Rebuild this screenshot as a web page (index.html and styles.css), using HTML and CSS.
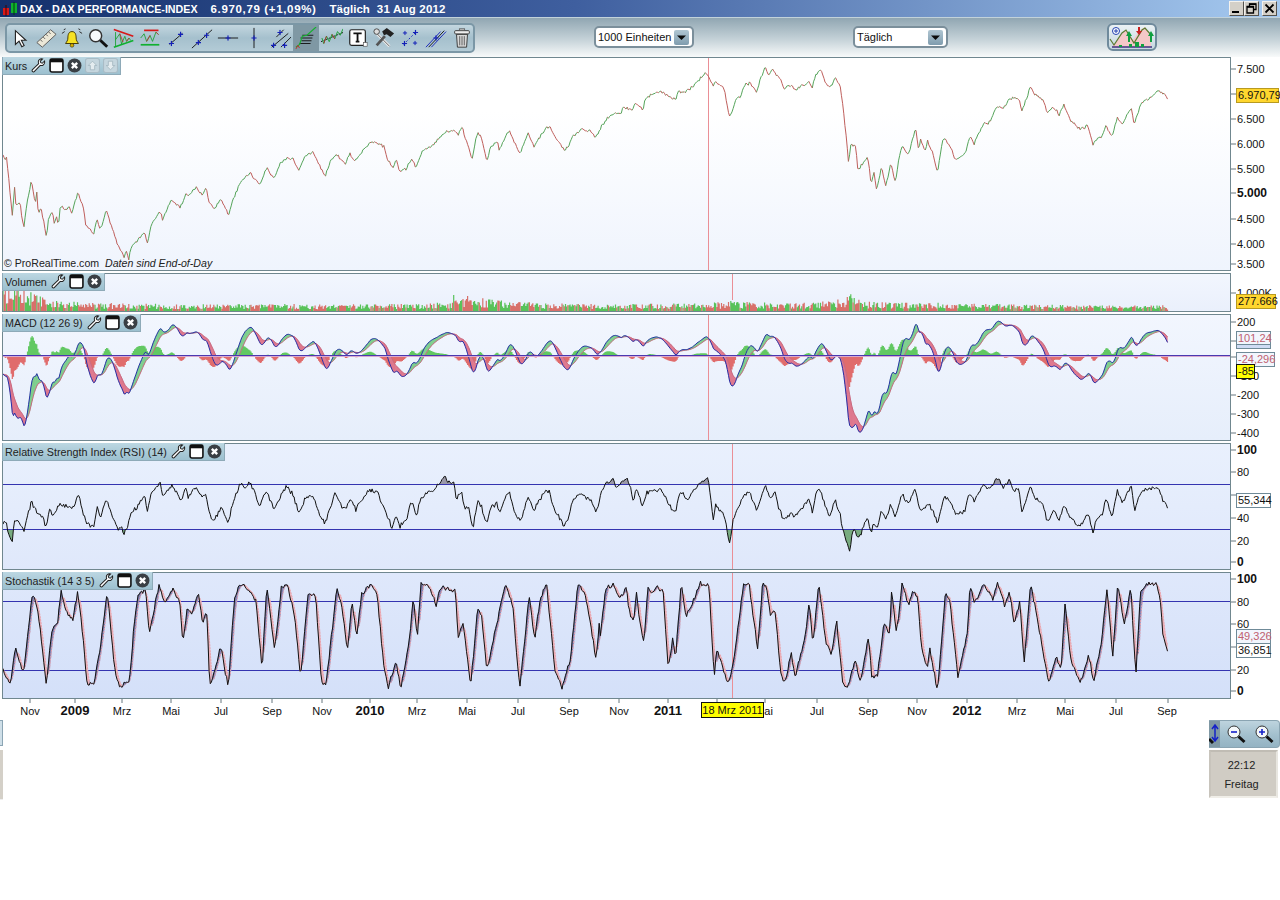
FILE: index.html
```html
<!DOCTYPE html>
<html lang="de">
<head>
<meta charset="utf-8">
<title>DAX - DAX PERFORMANCE-INDEX</title>
<link rel="stylesheet" href="styles.css">
</head>
<body>
<svg class="defs" width="0" height="0" aria-hidden="true">
  <symbol id="i-wrench" viewBox="0 0 16 16"><path d="M14.500 3.200 12 5.600 10.400 5 9.900 3.400 12.300 1.100C10 .5 7.700 1.800 7.800 4.300 7.900 5 8 5.600 8.200 6L1.600 12.500C.8 13.300 1.100 14.500 2 14.800 2.700 15 3.300 14.800 3.700 14.300L9.900 7.900C12.500 8.700 15.300 6.200 14.500 3.200Z" fill="#fff" stroke="#222" stroke-width="1.100"/></symbol>
  <symbol id="i-win" viewBox="0 0 14 14"><rect x="1" y="1" width="12" height="12" rx="1.500" fill="#fff" stroke="#111" stroke-width="1.500"/><rect x="1" y="1" width="12" height="3" fill="#111"/></symbol>
  <symbol id="i-close" viewBox="0 0 14 14"><circle cx="7" cy="7" r="6.500" fill="#3a3f44"/><path d="M4.500 4.500 9.500 9.500M9.500 4.500 4.500 9.500" stroke="#fff" stroke-width="2.200"/></symbol>
  <symbol id="i-up" viewBox="0 0 14 14"><rect x=".5" y=".5" width="13" height="13" rx="2" fill="#c5d6de" stroke="#a9bcc6"/><path d="M7 3 11 7H9V11H5V7H3Z" fill="#e4ecef" stroke="#9fb2bc" stroke-width=".7"/></symbol>
  <symbol id="i-down" viewBox="0 0 14 14"><rect x=".5" y=".5" width="13" height="13" rx="2" fill="#c5d6de" stroke="#a9bcc6"/><path d="M7 11 3 7H5V3H9V7H11Z" fill="#e4ecef" stroke="#9fb2bc" stroke-width=".7"/></symbol>
  <symbol id="i-caret" viewBox="0 0 15 15"><path d="M3 5.500H12L7.500 10Z" fill="#0b0b0b"/></symbol>
  <symbol id="i-cross" viewBox="0 0 6 6"><path d="M3 0V6M0 3H6" stroke="#1420b8" stroke-width="1.300"/></symbol>
</svg>

<header class="titlebar">
  <svg class="title-icon" width="17" height="14" viewBox="0 0 17 14"><rect x="2" y="6" width="6" height="7" fill="#d81818"/><path d="M5 3V14" stroke="#400"/><rect x="10" y="1" width="6" height="10" fill="#10b030"/><path d="M13 0V13" stroke="#040"/></svg>
  <span class="title-name">DAX - DAX PERFORMANCE-INDEX</span>
  <span class="title-value">6.970,79 (+1,09%)</span>
  <span class="title-period">Täglich</span>
  <span class="title-date">31 Aug 2012</span>
  <div class="winbtns">
    <button class="winbtn"><svg width="11" height="11" viewBox="0 0 11 11"><rect x="1" y="8" width="7" height="2" fill="#000"/></svg></button>
    <button class="winbtn"><svg width="11" height="11" viewBox="0 0 11 11"><path d="M3.500 3V.8H10V6.500H8M1 3.500H7.500V10H1Z" fill="none" stroke="#000" stroke-width="1.300"/><path d="M3 1.200H10M1 4H7.500" stroke="#000" stroke-width="1.500"/></svg></button>
    <button class="winbtn winbtn-close"><svg width="11" height="11" viewBox="0 0 11 11"><path d="M1.500 1.500 9.500 9.500M9.500 1.500 1.500 9.500" stroke="#000" stroke-width="1.800"/></svg></button>
  </div>
</header>

<section class="toolbar">
  <div class="tools">
    <span class="tool"><svg viewBox="0 0 24 24"><path d="M7 4V19L11 15.500 14 21.500 16.500 20.300 13.500 14.500H18.500Z" fill="#fff" stroke="#222" stroke-width="1.200"/></svg></span>
    <span class="tool"><svg viewBox="0 0 24 24"><path d="M2 17 17 3 23 8 8 22Z" fill="#ece8d8" stroke="#555"/><path d="M6 14 8 16M9 11 11 13M12 8 14 10M15 5.500 17 7.500" stroke="#555"/></svg></span>
    <span class="tool"><svg viewBox="0 0 24 24"><path d="M12 5C8 5 7.500 9 7.500 12 7.500 15 6 16 5 18H19C18 16 16.500 15 16.500 12 16.500 9 16 5 12 5Z" fill="#f6e224" stroke="#3a3000"/><circle cx="12" cy="20" r="2" fill="#d8b000" stroke="#3a3000" stroke-width=".7"/><path d="M4 5 1 7M20 5 23 7M5 2 3 3M19 2 21 3" stroke="#222"/></svg></span>
    <span class="tool"><svg viewBox="0 0 24 24"><circle cx="9.500" cy="9.500" r="6.500" fill="#f6fafc" stroke="#333" stroke-width="1.600"/><path d="M14.500 14.500 22 21.500" stroke="#111" stroke-width="3.200"/></svg></span>
    <span class="tool"><svg viewBox="0 0 26 24"><path d="M1 2 24 10" stroke="#d81818" stroke-width="2"/><path d="M1 23 24 15" stroke="#10b030" stroke-width="2"/><path d="M3 5V22M3 14 8 7 10 19 14 10 16 16 19 12 21 15" fill="none" stroke="#18a030"/><path d="M8 7 12 17M16 16 19 12" stroke="#c03030"/></svg></span>
    <span class="tool"><svg viewBox="0 0 26 24"><path d="M6 3H23" stroke="#d81818" stroke-width="2"/><path d="M2 20H24" stroke="#10b030" stroke-width="2"/><path d="M2 12 6 7 9 16 13 9 16 16 20 5 23 8" fill="none" stroke="#18a030"/><path d="M9 16 13 9M20 5 23 8" stroke="#c03030"/></svg></span>
    <span class="tool"><svg viewBox="0 0 24 24"><path d="M5 19 19 7" stroke="#111"/><use href="#i-cross" x="4" y="15" width="6" height="6"/><use href="#i-cross" x="14" y="5" width="6" height="6"/></svg></span>
    <span class="tool"><svg viewBox="0 0 24 24"><path d="M1 23 23 3" stroke="#111"/><use href="#i-cross" x="5" y="14" width="6" height="6"/><use href="#i-cross" x="14" y="6" width="6" height="6"/></svg></span>
    <span class="tool"><svg viewBox="0 0 24 24"><path d="M1 12H23" stroke="#111"/><use href="#i-cross" x="9" y="9" width="6" height="6"/></svg></span>
    <span class="tool"><svg viewBox="0 0 24 24"><path d="M12 1V23" stroke="#111"/><use href="#i-cross" x="9" y="9" width="6" height="6"/></svg></span>
    <span class="tool"><svg viewBox="0 0 24 24"><path d="M3 22 21 7M8 11 16 3M13 22 24 11" stroke="#111"/><use href="#i-cross" x="9" y="3" width="6" height="6"/><use href="#i-cross" x="2" y="17" width="6" height="6"/><use href="#i-cross" x="14" y="17" width="6" height="6"/></svg></span>
    <span class="tool tool-on"><svg viewBox="0 0 24 24"><path d="M8 9H20M6 12H19M7 15H18M5 18H17" stroke="#111"/><path d="M1 22 5 19 8 10 13 9 23 0" fill="none" stroke="#18b030" stroke-width="1.300"/><path d="M1 24 3 20 5 23" fill="none" stroke="#c03030"/></svg></span>
    <span class="tool"><svg viewBox="0 0 24 24"><path d="M0 16 24 6" stroke="#111" stroke-dasharray="2 1"/><path d="M1 12 3 18 6 10 9 16 12 8 15 13 18 5 21 9 24 2" fill="none" stroke="#18a030"/><path d="M3 18 6 10M12 8 15 13" stroke="#b03030"/></svg></span>
    <span class="tool"><svg viewBox="0 0 24 24"><rect x="3" y="3" width="17" height="17" rx="2" fill="#fff" stroke="#222" stroke-width="1.300"/><path d="M7 7H16M11.500 7V16M9.500 16H13.500" stroke="#111" stroke-width="2"/><rect x="18" y="17" width="4" height="4" fill="#fff" stroke="#555" stroke-width=".7"/></svg></span>
    <span class="tool"><svg viewBox="0 0 24 24"><path d="M3 6 18 21" stroke="#e8e8e8" stroke-width="3"/><path d="M3 6 18 21" stroke="#444" stroke-width=".8"/><path d="M4 20 13 10" stroke="#555" stroke-width="3"/><path d="M10 5 15 1 23 7 19 11 15 8 12 9Z" fill="#222"/><circle cx="4" cy="5" r="3" fill="#ddd" stroke="#444"/></svg></span>
    <span class="tool"><svg viewBox="0 0 24 24"><path d="M5 19 19 5" stroke="#1420b8" stroke-dasharray="2 2"/><use href="#i-cross" x="3" y="15" width="6" height="6"/><use href="#i-cross" x="15" y="3" width="6" height="6"/><use href="#i-cross" x="15" y="15" width="5" height="5"/><use href="#i-cross" x="4" y="4" width="5" height="5"/></svg></span>
    <span class="tool"><svg viewBox="0 0 24 24"><path d="M1 22 17 5M7 22 23 5" stroke="#1420b8"/><path d="M4 22 21 4" stroke="#111"/><use href="#i-cross" x="9" y="9" width="6" height="6"/></svg></span>
    <span class="tool"><svg viewBox="0 0 24 24"><path d="M6 8H18L17 22H7Z" fill="#d8d8d8" stroke="#333"/><path d="M9.500 10V20M12 10V20M14.500 10V20" stroke="#555"/><rect x="4" y="4" width="16" height="3.500" rx="1" fill="#eee" stroke="#333"/><rect x="9" y="2" width="6" height="2" fill="#bbb" stroke="#333" stroke-width=".6"/></svg></span>
  </div>
  <div class="select select-units"><span>1000 Einheiten</span><i class="select-arrow"><svg width="15" height="15"><use href="#i-caret"/></svg></i></div>
  <div class="select select-period"><span>Täglich</span><i class="select-arrow"><svg width="15" height="15"><use href="#i-caret"/></svg></i></div>
  <button class="chart-button"><svg width="46" height="24" viewBox="0 0 46 24"><path d="M3 22 12 10 17 5 24 15 31 5 36 2 42 12V22Z" fill="#f4c8c8"/><path d="M1 14 5 20 13 8 17 5 25 18 33 5 36 3 43 11" fill="none" stroke="#5a7a30" stroke-width="1.200"/><circle cx="7" cy="6" r="3.500" fill="#fff" stroke="#2040b0"/><path d="M7 4V8M5 6H9" stroke="#2040b0"/><path d="M29 2V6H27L30 10 33 6H31V2Z" fill="#c82020"/><path d="M19 17V11H17L20 6 23 11H21V17ZM41 17V11H39L42 6 45 11H43V17Z" fill="#10a040"/><path d="M3 22H43" stroke="#403080" stroke-width="1.300"/><path d="M10 20h3v2h-3zM20 19h3v3h-3zM26 17h4v5h-4zM32 19h3v3h-3z" fill="#10a040"/></svg></button>
</section>

<main class="panes">
  <section class="pane">
    <div class="plot plot-price">
      <svg id="chart-price" class="chart" viewBox="3 58 1227 212"></svg>
      <div class="chip"><span>Kurs</span><svg class="ci"><use href="#i-wrench"/></svg><svg class="ci"><use href="#i-win"/></svg><svg class="ci"><use href="#i-close"/></svg><svg class="ci"><use href="#i-up"/></svg><svg class="ci"><use href="#i-down"/></svg></div>
      <div class="credit">© ProRealTime.com&nbsp; <em>Daten sind End-of-Day</em></div>
    </div>
    <div class="axis">
      <svg class="axis-svg" viewBox="1231 57 49 214">
        <path class="tick" d="M1231 69h5M1231 94h5M1231 119h5M1231 144h5M1231 169h5M1231 193h5M1231 219h5M1231 244h5M1231 264h5"/>
        <text x="1237" y="73">7.500</text><text x="1237" y="123">6.500</text><text x="1237" y="148">6.000</text><text x="1237" y="173">5.500</text><text x="1237" y="197" class="b">5.000</text><text x="1237" y="248">4.000</text><text x="1237" y="223">4.500</text><text x="1237" y="268">3.500</text>
      </svg>
      <div class="badge badge-price">6.970,79</div>
    </div>
  </section>

  <section class="pane">
    <div class="plot plot-volume">
      <svg id="chart-volume" class="chart" viewBox="3 274 1227 37"></svg>
      <div class="chip"><span>Volumen</span><svg class="ci"><use href="#i-wrench"/></svg><svg class="ci"><use href="#i-win"/></svg><svg class="ci"><use href="#i-close"/></svg></div>
    </div>
    <div class="axis">
      <svg class="axis-svg" viewBox="1231 273 49 39"><path class="tick" d="M1231 293h5"/><text x="1237" y="297">1.000K</text></svg>
      <div class="badge badge-volume">277.666</div>
    </div>
  </section>

  <section class="pane">
    <div class="plot plot-macd">
      <svg id="chart-macd" class="chart" viewBox="3 315 1227 125"></svg>
      <div class="chip"><span>MACD (12 26 9)</span><svg class="ci"><use href="#i-wrench"/></svg><svg class="ci"><use href="#i-win"/></svg><svg class="ci"><use href="#i-close"/></svg></div>
    </div>
    <div class="axis">
      <svg class="axis-svg" viewBox="1231 314 49 127">
        <path class="tick" d="M1231 322h5M1231 341h5M1231 357h5M1231 376h5M1231 395h5M1231 414h5M1231 433h5"/>
        <text x="1237" y="326">200</text><text x="1237" y="380">-100</text><text x="1237" y="399">-200</text><text x="1237" y="418">-300</text><text x="1237" y="437">-400</text>
      </svg>
      <div class="badge badge-macd-blue"></div>
      <div class="badge badge-macd-1">101,24</div>
      <div class="badge badge-macd-2">-24,296</div>
      <div class="badge badge-macd-3">-85</div>
    </div>
  </section>

  <section class="pane">
    <div class="plot plot-rsi">
      <svg id="chart-rsi" class="chart" viewBox="3 444 1227 125"></svg>
      <div class="chip"><span>Relative Strength Index (RSI) (14)</span><svg class="ci"><use href="#i-wrench"/></svg><svg class="ci"><use href="#i-win"/></svg><svg class="ci"><use href="#i-close"/></svg></div>
    </div>
    <div class="axis">
      <svg class="axis-svg" viewBox="1231 443 49 127">
        <path class="tick" d="M1231 450h5M1231 472h5M1231 495h5M1231 518h5M1231 541h5M1231 562h5"/>
        <text x="1237" y="454" class="b">100</text><text x="1237" y="476">80</text><text x="1237" y="522">40</text><text x="1237" y="545">20</text><text x="1237" y="566" class="b">0</text>
      </svg>
      <div class="badge badge-rsi">55,344</div>
    </div>
  </section>

  <section class="pane">
    <div class="plot plot-stoch">
      <svg id="chart-stoch" class="chart" viewBox="3 573 1227 125"></svg>
      <div class="chip"><span>Stochastik (14 3 5)</span><svg class="ci"><use href="#i-wrench"/></svg><svg class="ci"><use href="#i-win"/></svg><svg class="ci"><use href="#i-close"/></svg></div>
    </div>
    <div class="axis">
      <svg class="axis-svg" viewBox="1231 572 49 127">
        <path class="tick" d="M1231 579h5M1231 602h5M1231 624h5M1231 647h5M1231 670h5M1231 691h5"/>
        <text x="1237" y="583" class="b">100</text><text x="1237" y="606">80</text><text x="1237" y="628">60</text><text x="1237" y="674">20</text><text x="1237" y="695" class="b">0</text>
      </svg>
      <div class="badge badge-stoch-1">49,326</div>
      <div class="badge badge-stoch-2">36,851</div>
    </div>
  </section>
</main>

<section class="dates">
  <svg class="dates-svg" viewBox="0 699 1280 21">
    <path class="tick" d="M30 699v4M75 699v4M122 699v4M171 699v4M221 699v4M272 699v4M322 699v4M370 699v4M417 699v4M467 699v4M518 699v4M569 699v4M619 699v4M668 699v4M717 699v4M765 699v4M817 699v4M868 699v4M917 699v4M967 699v4M1017 699v4M1065 699v4M1116 699v4M1168 699v4"/>
    <text x="30" y="715">Nov</text><text x="75" y="715" class="b">2009</text><text x="122" y="715">Mrz</text><text x="171" y="715">Mai</text><text x="221" y="715">Jul</text><text x="272" y="715">Sep</text><text x="322" y="715">Nov</text><text x="370" y="715" class="b">2010</text><text x="417" y="715">Mrz</text><text x="467" y="715">Mai</text><text x="518" y="715">Jul</text><text x="569" y="715">Sep</text><text x="619" y="715">Nov</text><text x="668" y="715" class="b">2011</text><text x="764" y="715">Mai</text><text x="817" y="715">Jul</text><text x="868" y="715">Sep</text><text x="917" y="715">Nov</text><text x="967" y="715" class="b">2012</text><text x="1017" y="715">Mrz</text><text x="1065" y="715">Mai</text><text x="1116" y="715">Jul</text><text x="1167" y="715">Sep</text>
  </svg>
  <div class="date-flag">18 Mrz 2011</div>
</section>

<footer class="bottom">
  <div class="bottom-left"><div class="stub-bar"></div><div class="stub-clock"></div></div>
  <div class="bottom-right">
    <div class="zoombar">
      <span class="zoom-range"><svg width="11" height="24" viewBox="0 0 11 24"><path d="M0 18 4 22" stroke="#111" stroke-width="3"/><path d="M6 5V19M3 8 6 4 9 8M3 16 6 20 9 16" fill="none" stroke="#1420c8" stroke-width="1.500"/></svg></span>
      <svg class="zoom-icon" width="20" height="20" viewBox="0 0 20 20"><circle cx="8" cy="8" r="6" fill="#f4f8fa" stroke="#333"/><path d="M5 8H11" stroke="#1420c8" stroke-width="1.600"/><path d="M12.500 12.500 18.500 18" stroke="#111" stroke-width="3"/></svg>
      <svg class="zoom-icon" width="20" height="20" viewBox="0 0 20 20"><circle cx="8" cy="8" r="6" fill="#f4f8fa" stroke="#333"/><path d="M5 8H11M8 5V11" stroke="#1420c8" stroke-width="1.600"/><path d="M12.500 12.500 18.500 18" stroke="#111" stroke-width="3"/></svg>
    </div>
    <div class="clock"><span>22:12</span><span>Freitag</span></div>
  </div>
</footer>
<script src="script.js"></script>
</body>
</html>
```
FILE: styles.css
```css
* { box-sizing: border-box; }
html, body { margin: 0; padding: 0; background: #fff; }
body { width: 1280px; height: 900px; overflow: hidden; font-family: "Liberation Sans", Arial, sans-serif; font-size: 11px; color: #111; }
.defs { position: absolute; }

.titlebar { height: 17px; display: flex; align-items: center; background: linear-gradient(90deg, #14306c 0%, #3f5f9f 45%, #a6caf0 100%); color: #fff; font-weight: bold; font-size: 11.500px; padding-left: 1px; white-space: nowrap; }
.title-icon { flex: none; margin-right: 2px; }
.title-name { font-size: 10.700px; }
.title-value { margin-left: 13px; letter-spacing: .65px; }
.title-period { margin-left: 13px; }
.title-date { margin-left: 7px; letter-spacing: .2px; }
.winbtns { margin-left: auto; display: flex; padding-right: 3px; }
.winbtn { width: 15px; height: 15px; padding: 0; display: flex; align-items: center; justify-content: center; background: #d4d0c8; border: 1px solid; border-color: #f4f2ee #55534e #55534e #f4f2ee; }
.winbtn-close { margin-left: 3px; }

.toolbar { height: 40px; display: flex; align-items: flex-start; padding: 5px 0 0 5px; background: linear-gradient(180deg, #90a6b2 0%, #c5d2d8 55%, #f8fafa 100%); border-top: 1px solid #c2d2da; }
.tools { width: 470px; height: 30px; display: flex; align-items: center; border: 2px solid #7b97a6; border-radius: 5px; background: linear-gradient(180deg, #c3d6df 0%, #a5c0cd 50%, #b3cbd6 100%); }
.tool { width: 26px; height: 26px; flex: none; display: flex; align-items: center; justify-content: center; }
.tool svg { width: 22px; height: 22px; }
.tool-on { background: #7f98a4; }

.select { width: 100px; height: 22px; margin-top: 3px; display: flex; align-items: center; justify-content: space-between; padding: 0 3px 0 2px; font-size: 11px; white-space: nowrap; background: #fff; border: 2px solid #7b8f9b; border-radius: 5px; }
.select-units { margin-left: 119px; }
.select-period { width: 95px; margin-left: 159px; }
.select-arrow { width: 15px; height: 15px; display: flex; align-items: center; border-radius: 2px; background: linear-gradient(180deg, #b0c6d2, #7f9cae); }
.chart-button { width: 50px; height: 28px; margin-left: 159px; padding: 0; display: flex; align-items: center; justify-content: center; background: linear-gradient(180deg, #eaf1f4, #c6d8e0); border: 2px solid #6f8a9c; border-radius: 6px; }

.panes { display: flex; flex-direction: column; gap: 2px; }
.pane { display: flex; }
.plot { position: relative; width: 1229px; margin-left: 2px; border: 1px solid #70878f; flex: none; }
.plot-price { height: 214px; background: linear-gradient(180deg, #fff 0%, #fff 25%, #eff4fd 100%); }
.plot-volume { height: 39px; background: linear-gradient(180deg, #f2f6fe, #eaf0fc); }
.plot-macd { height: 127px; background: linear-gradient(180deg, #f2f6fe, #e6eefb); }
.plot-rsi { height: 127px; background: linear-gradient(180deg, #e9f0fd, #dfe8fb); }
.plot-stoch { height: 127px; background: linear-gradient(180deg, #dfe8fb, #d4e0f9); }
.chart { display: block; width: 100%; height: 100%; }

.chip { position: absolute; left: -1px; top: -1px; height: 18px; display: flex; align-items: center; padding: 0 2px 0 2px; font-size: 10.750px; color: #222; background: linear-gradient(180deg, #bcd7e2, #9cc0cf); border: 1px solid #8eaab8; border-top: 0; white-space: nowrap; }
.ci { width: 15px; height: 15px; margin-left: 3px; flex: none; }
.chip span { margin-right: 1px; }
.credit { position: absolute; left: 1px; bottom: 0; font-size: 10.600px; line-height: 13px; color: #222; }
.credit em { font-style: italic; }

.axis { position: relative; flex: 1; }
.axis-svg { display: block; width: 49px; height: 100%; }
.axis-svg text { font-size: 11px; fill: #111; font-family: "Liberation Sans", Arial, sans-serif; }
.axis-svg text.b { font-size: 12px; font-weight: bold; }
.tick { stroke: #66777f; fill: none; }

.badge { position: absolute; left: 5px; height: 15px; line-height: 13px; padding: 0 1px; border: 1px solid #6f8a98; white-space: nowrap; background: #f2f6fd; }
.badge-price { top: 31px; width: 43px; background: #ffd62e; border-color: #b89a20; }
.badge-volume { top: 21px; width: 40px; background: #ffd62e; border-color: #b89a20; }
.badge-macd-blue { top: 28px; width: 35px; height: 7px; background: #cfdcf4; }
.badge-macd-1 { top: 17px; width: 35px; height: 14px; color: #c06070; }
.badge-macd-2 { top: 38px; width: 39px; color: #c06070; }
.badge-macd-3 { top: 50px; width: 19px; background: #ffff00; border-color: #111; }
.badge-rsi { top: 50px; width: 35px; background: #fff; }
.badge-stoch-1 { top: 57px; width: 35px; color: #c06070; }
.badge-stoch-2 { top: 71px; width: 35px; background: #fff; }

.dates { position: relative; height: 21px; }
.dates-svg { display: block; width: 1280px; height: 21px; }
.dates-svg text { font-size: 11px; text-anchor: middle; fill: #111; font-family: "Liberation Sans", Arial, sans-serif; }
.dates-svg text.b { font-size: 13px; font-weight: bold; }
.date-flag { position: absolute; left: 701px; top: 3px; width: 63px; height: 16px; line-height: 14px; text-align: center; background: #ffff00; border: 1px solid #111; font-size: 11px; white-space: nowrap; }

.bottom { height: 80px; display: flex; justify-content: space-between; }
.bottom-left { width: 3px; display: flex; flex-direction: column; gap: 4px; }
.stub-bar { height: 26px; background: #cfdfe8; border: 1px solid #8ba5b4; border-left: 0; }
.stub-clock { height: 50px; background: #d4d0c8; border-bottom: 1px solid #eee; }
.bottom-right { width: 71px; display: flex; flex-direction: column; gap: 2px; }
.zoombar { height: 28px; display: flex; align-items: center; background: linear-gradient(180deg, #bed4de 0%, #a2bfcd 55%, #94b3c3 100%); border: 1px solid #8aa4b2; border-left: 0; border-radius: 0 4px 4px 0; }
.zoom-range { width: 11px; height: 26px; flex: none; background: #7f98a4; }
.zoom-icon { margin-left: 6px; flex: none; }
.zoom-icon + .zoom-icon { margin-left: 8px; }
.clock { width: 69px; height: 48px; display: flex; flex-direction: column; align-items: center; justify-content: center; gap: 7px; padding-right: 4px; font-size: 11px; color: #222; background: #d0ccc4; border: 2px solid; border-color: #c0bcb4 #e8e6e0 #f0eee8 #c8c4bc; }
```
FILE: script.js
```js
(function () {
  var NS = 'http://www.w3.org/2000/svg';
  var seed = 12345;
  function rnd() {
    seed = (seed + 0x6D2B79F5) | 0;
    var t = Math.imul(seed ^ (seed >>> 15), 1 | seed);
    t = (t + Math.imul(t ^ (t >>> 7), 61 | t)) ^ t;
    return ((t ^ (t >>> 14)) >>> 0) / 4294967296;
  }
  function noise() { return rnd() + rnd() - 1; }

  // Readings taken from two chart halves: [x, y] at 2.613 px/x and 3 px/y.
  function readings(y0, left, right) {
    return left.map(function (p) { return [p[0] / 2.613, y0 + p[1] / 3]; })
      .concat(right.map(function (p) { return [600 + p[0] / 2.613, y0 + p[1] / 3]; }));
  }
  var priceLine = readings(60,
    [[8,283],[14,300],[16,283],[22,340],[32,470],[38,375],[42,440],[52,428],[62,508],[70,430],[82,362],[92,430],[96,400],[100,460],[108,445],[121,532],[126,480],[136,452],[142,490],[148,465],[153,495],[158,435],[168,452],[178,440],[188,457],[204,398],[218,440],[224,492],[244,525],[253,476],[262,510],[277,452],[290,490],[305,550],[320,580],[324,600],[330,568],[336,600],[342,565],[378,515],[386,552],[395,495],[418,452],[425,478],[448,418],[472,442],[487,398],[492,410],[512,382],[528,402],[538,385],[548,430],[560,448],[578,418],[598,466],[608,420],[628,368],[642,350],[655,338],[664,356],[680,372],[697,320],[716,358],[732,310],[748,293],[765,295],[780,330],[795,295],[818,273],[832,310],[850,350],[862,305],[878,283],[903,310],[915,282],[928,302],[968,245],[985,248],[1005,262],[1012,300],[1027,322],[1035,298],[1045,335],[1062,325],[1075,295],[1086,322],[1105,272],[1130,255],[1165,215],[1190,210],[1196,228],[1208,200],[1216,235],[1234,295],[1248,215],[1258,235],[1272,300],[1282,262],[1300,245],[1303,270],[1330,210],[1345,250],[1358,280],[1380,222],[1395,258],[1425,205],[1437,200],[1450,230],[1472,268],[1484,265],[1495,230],[1520,210],[1545,215],[1558,232],[1567,210]],
    [[0,208],[14,180],[35,160],[55,160],[60,140],[85,150],[92,128],[112,150],[118,115],[140,100],[160,95],[197,122],[205,92],[222,98],[240,80],[278,40],[296,80],[302,65],[325,85],[338,175],[358,112],[368,110],[378,75],[392,70],[410,98],[418,55],[432,25],[442,45],[450,28],[470,55],[480,85],[500,75],[510,92],[545,65],[555,85],[562,45],[578,32],[590,72],[600,85],[615,52],[628,80],[638,170],[650,310],[655,255],[668,255],[674,330],[700,290],[708,370],[716,340],[723,390],[735,320],[747,378],[760,308],[772,370],[780,300],[790,255],[806,288],[824,203],[834,280],[836,230],[850,275],[856,245],[870,280],[882,338],[895,240],[905,238],[930,300],[955,280],[966,230],[978,250],[1000,195],[1020,185],[1035,140],[1055,145],[1070,115],[1095,115],[1102,155],[1125,80],[1135,100],[1155,115],[1170,160],[1185,140],[1200,165],[1212,135],[1230,180],[1255,210],[1275,195],[1288,255],[1298,235],[1312,228],[1322,195],[1338,232],[1352,170],[1364,195],[1388,142],[1396,192],[1412,136],[1420,125],[1440,112],[1456,92],[1470,102],[1478,104],[1483,118]]);
  var rsiLine = readings(440,
    [[8,245],[16,240],[20,270],[32,310],[38,238],[48,245],[62,270],[82,185],[96,215],[108,228],[121,260],[130,210],[140,228],[155,195],[168,197],[190,208],[204,158],[222,240],[244,265],[254,202],[262,235],[277,176],[296,235],[310,272],[318,260],[324,280],[332,260],[345,212],[360,200],[378,165],[386,212],[395,160],[418,128],[425,168],[450,135],[472,185],[487,140],[492,172],[512,140],[528,170],[538,165],[548,225],[560,243],[578,198],[596,247],[610,185],[628,130],[642,145],[650,128],[662,145],[678,200],[695,148],[715,208],[748,135],[765,165],[782,222],[795,180],[815,162],[835,225],[850,250],[875,160],[888,185],[900,210],[915,175],[930,208],[965,150],[985,155],[1005,205],[1025,265],[1035,225],[1045,262],[1065,230],[1075,185],[1088,225],[1100,170],[1130,155],[1160,110],[1172,130],[1185,125],[1192,180],[1205,155],[1215,210],[1225,195],[1235,268],[1248,180],[1258,200],[1272,250],[1282,200],[1300,190],[1303,220],[1330,152],[1345,220],[1360,245],[1380,170],[1395,210],[1425,150],[1435,155],[1450,210],[1472,253],[1484,240],[1495,185],[1515,155],[1545,185],[1558,220],[1567,178]],
    [[0,175],[10,135],[35,115],[42,145],[68,112],[80,145],[88,185],[95,145],[112,200],[122,155],[160,148],[178,190],[197,222],[205,170],[218,155],[225,185],[240,160],[262,125],[282,115],[296,235],[302,195],[325,225],[338,315],[348,240],[358,210],[378,160],[392,160],[400,185],[410,212],[432,135],[445,175],[458,160],[470,215],[480,238],[500,220],[510,230],[545,180],[555,215],[565,158],[578,152],[590,205],[600,232],[615,180],[628,230],[636,275],[652,333],[662,268],[675,298],[698,235],[708,275],[715,250],[722,270],[735,210],[747,235],[760,195],[772,228],[790,160],[806,190],[824,142],[834,205],[850,205],[856,190],[870,210],[882,250],[900,170],[910,175],[930,225],[955,210],[966,158],[978,185],[1000,135],[1020,145],[1040,112],[1055,145],[1070,115],[1080,155],[1095,145],[1102,220],[1125,135],[1135,175],[1155,185],[1170,248],[1185,210],[1200,240],[1212,198],[1230,235],[1255,258],[1275,220],[1288,272],[1298,235],[1312,230],[1322,175],[1338,228],[1352,155],[1364,190],[1388,135],[1396,210],[1415,155],[1440,148],[1456,140],[1470,175],[1483,200]]);
  var stochLine = readings(440,
    [[8,692],[27,735],[40,625],[48,655],[62,695],[85,455],[100,520],[121,738],[135,570],[150,550],[160,455],[175,520],[190,540],[203,455],[215,570],[228,733],[245,733],[265,600],[280,455],[300,690],[312,742],[338,725],[350,560],[360,462],[380,450],[390,580],[415,435],[430,490],[450,445],[470,490],[478,605],[490,500],[500,530],[518,455],[530,555],[540,510],[548,738],[560,695],[578,615],[585,680],[597,735],[612,480],[625,432],[650,445],[668,480],[685,688],[697,435],[718,628],[735,445],[750,432],[770,530],[785,712],[805,460],[825,470],[840,730],[852,733],[880,440],[892,490],[908,628],[920,485],[932,595],[945,460],[970,435],[985,460],[1003,680],[1015,740],[1035,665],[1047,745],[1070,600],[1080,470],[1090,595],[1100,432],[1120,438],[1140,495],[1150,440],[1170,445],[1190,455],[1197,595],[1210,550],[1230,738],[1248,505],[1258,525],[1272,690],[1300,540],[1320,432],[1340,500],[1358,745],[1383,465],[1397,600],[1412,470],[1428,432],[1450,690],[1468,745],[1490,660],[1510,432],[1530,460],[1558,660],[1567,530]],
    [[0,595],[15,445],[35,432],[50,475],[68,445],[78,525],[88,545],[95,455],[105,555],[115,605],[125,437],[135,460],[150,437],[165,455],[178,685],[190,600],[198,650],[212,432],[225,530],[245,480],[262,427],[285,440],[298,710],[305,630],[335,735],[350,660],[375,430],[390,435],[412,628],[425,428],[435,440],[445,520],[458,510],[472,700],[482,728],[500,645],[510,710],[535,600],[547,485],[556,612],[572,428],[590,610],[605,642],[618,540],[635,735],[645,745],[667,665],[680,725],[702,590],[710,710],[725,710],[742,545],[757,585],[762,450],[775,580],[790,425],[805,498],[818,450],[830,470],[840,625],[855,685],[862,630],[882,755],[903,455],[915,490],[935,712],[960,580],[967,435],[978,490],[1003,430],[1027,480],[1038,425],[1058,500],[1070,450],[1082,555],[1097,485],[1108,668],[1125,430],[1140,520],[1172,730],[1192,650],[1205,690],[1215,490],[1230,660],[1255,728],[1277,645],[1290,728],[1310,605],[1325,445],[1340,650],[1353,430],[1370,555],[1387,440],[1400,710],[1412,460],[1430,430],[1455,432],[1465,490],[1470,580],[1482,630]]);
  var volumeEnvelope = [[3,20],[15,21],[30,17],[50,9],[100,7],[200,6],[300,6],[400,6],[452,8],[455,22],[458,10],[470,14],[490,10],[540,7],[600,6],[700,7],[730,8],[732,12],[735,8],[800,7],[845,11],[849,17],[853,12],[870,8],[950,7],[1000,6],[1100,5],[1167,5]];

  function at(points, x) {
    var i = 1;
    while (i < points.length - 1 && points[i][0] < x) i++;
    var a = points[i - 1], b = points[i];
    var t = b[0] === a[0] ? 0 : (x - a[0]) / (b[0] - a[0]);
    t = Math.max(0, Math.min(1, t));
    return a[1] + (b[1] - a[1]) * t;
  }
  var START = 3, STEP = 1.1645, BARS = 1001, xs = [];
  for (var n = 0; n < BARS; n++) xs.push(START + n * STEP);
  function r(v) { return Math.round(v * 10) / 10; }
  function el(svg, name, attrs) {
    var node = document.createElementNS(NS, name);
    for (var k in attrs) node.setAttribute(k, attrs[k]);
    svg.appendChild(node);
    return node;
  }
  function stroke(svg, d, color, width, extra) {
    var a = { d: d, fill: 'none', stroke: color, 'stroke-width': width };
    for (var k in extra || {}) a[k] = extra[k];
    el(svg, 'path', a);
  }
  function line(values) {
    return 'M' + values.map(function (v, i) { return r(xs[i]) + ' ' + r(v); }).join('L');
  }
  function ribbon(svg, a, b, upColor, downColor, yDir) {
    var up = '', down = '';
    for (var i = 1; i < a.length; i++) {
      var q = 'M' + r(xs[i - 1]) + ' ' + r(a[i - 1]) + 'L' + r(xs[i]) + ' ' + r(a[i]) + 'L' + r(xs[i]) + ' ' + r(b[i]) + 'L' + r(xs[i - 1]) + ' ' + r(b[i - 1]) + 'Z';
      if ((a[i] - b[i]) * yDir > 0) up += q; else down += q;
    }
    el(svg, 'path', { d: up, fill: upColor, stroke: upColor, 'stroke-width': .3 });
    el(svg, 'path', { d: down, fill: downColor, stroke: downColor, 'stroke-width': .3 });
  }
  function cursor(svg, x, y1, y2) {
    el(svg, 'path', { d: 'M' + x + ' ' + y1 + 'V' + y2, stroke: '#ea8f96', 'stroke-width': 1 });
  }
  function hline(svg, y, color) {
    el(svg, 'path', { d: 'M3 ' + y + 'H1230', stroke: color || '#3434b0', 'stroke-width': 1 });
  }

  // Price
  var priceY = xs.map(function (x) { return at(priceLine, x) + noise() * 2; });
  var priceSvg = document.getElementById('chart-price');
  cursor(priceSvg, 708.5, 58, 270);
  var upD = '', downD = '';
  for (var i = 1; i < BARS; i++) {
    var seg = 'M' + r(xs[i - 1]) + ' ' + r(priceY[i - 1]) + 'L' + r(xs[i]) + ' ' + r(priceY[i]);
    if (priceY[i] <= priceY[i - 1]) upD += seg; else downD += seg;
  }
  stroke(priceSvg, upD, '#55a45a', 1);
  stroke(priceSvg, downD, '#bf5f5c', 1);

  // Volume
  var volSvg = document.getElementById('chart-volume');
  var vUp = '', vDown = '';
  xs.forEach(function (x, k) {
    var h = at(volumeEnvelope, x) * (0.3 + rnd() * 0.85);
    var s = 'M' + r(x) + ' 311V' + r(311 - h);
    if (k === 0 || priceY[k] <= priceY[k - 1]) vUp += s; else vDown += s;
  });
  stroke(volSvg, vUp, '#58c25a', 1.2);
  stroke(volSvg, vDown, '#d8706a', 1.2);
  cursor(volSvg, 732.5, 274, 300);

  // MACD, computed from the price series
  var smooth = xs.map(function (x) { return 7500 - (at(priceLine, x) + noise() * 0.7 - 69) * 20.5; });
  var pre = [];
  for (var w = 0; w < 70; w++) pre.push(6700 - (6700 - smooth[0]) * w / 70);
  var all = pre.concat(smooth);
  function ema(values, len) {
    var k = 2 / (len + 1), out = [], prev = values[0];
    values.forEach(function (v) { prev = prev + (v - prev) * k; out.push(prev); });
    return out;
  }
  var e12 = ema(all, 12), e26 = ema(all, 26);
  var macdAll = e12.map(function (v, k) { return v - e26[k]; });
  var sigAll = ema(macdAll, 9);
  var macd = macdAll.slice(70), sig = sigAll.slice(70);
  var Y0 = 356.5, K = 0.19;
  var macdY = macd.map(function (v) { return Y0 - v * K; });
  var sigY = sig.map(function (v) { return Y0 - v * K; });
  var macdSvg = document.getElementById('chart-macd');
  cursor(macdSvg, 708.5, 315, 440);
  var hUp = '', hDown = '';
  xs.forEach(function (x, k) {
    var d = macd[k] - sig[k];
    var s = 'M' + r(x) + ' ' + Y0 + 'V' + r(Y0 - d * K);
    if (d >= 0) hUp += s; else hDown += s;
  });
  stroke(macdSvg, hUp, '#62c862', 1.2);
  stroke(macdSvg, hDown, '#e06c6c', 1.2);
  ribbon(macdSvg, macdY, sigY, '#80d090', '#e07a90', -1);
  stroke(macdSvg, line(sigY), '#c86a80', 1);
  stroke(macdSvg, line(macdY), '#2530a8', 1);
  hline(macdSvg, 356.5, '#d8a8d0');
  hline(macdSvg, 355.5, '#4a38b0');

  // RSI
  var rsiY = xs.map(function (x) { return at(rsiLine, x) + noise() * 3; });
  var rsiSvg = document.getElementById('chart-rsi');
  var defs = el(rsiSvg, 'defs', {});
  var clipA = el(defs, 'clipPath', { id: 'rsi-high' }); el(clipA, 'rect', { x: 0, y: 444, width: 1280, height: 40.500 });
  var clipB = el(defs, 'clipPath', { id: 'rsi-low' }); el(clipB, 'rect', { x: 0, y: 529.500, width: 1280, height: 40 });
  var areaHigh = line(rsiY) + 'L' + r(xs[BARS - 1]) + ' 484.5L3 484.5Z';
  var areaLow = line(rsiY) + 'L' + r(xs[BARS - 1]) + ' 529.5L3 529.5Z';
  el(rsiSvg, 'path', { d: areaHigh, fill: '#9a98a8', 'clip-path': 'url(#rsi-high)' });
  el(rsiSvg, 'path', { d: areaLow, fill: '#78ac80', 'clip-path': 'url(#rsi-low)' });
  cursor(rsiSvg, 732.5, 444, 569);
  hline(rsiSvg, 484.5);
  hline(rsiSvg, 529.5);
  stroke(rsiSvg, line(rsiY), '#111', 1);

  // Stochastic
  var kY = xs.map(function (x) { return at(stochLine, x) + noise() * 3; });
  var dY = kY.map(function (v, k) {
    var sum = 0, c = 0;
    for (var j = Math.max(0, k - 3); j <= k; j++) { sum += kY[j]; c++; }
    return sum / c;
  });
  var stSvg = document.getElementById('chart-stoch');
  cursor(stSvg, 732.5, 573, 698);
  hline(stSvg, 601.5);
  hline(stSvg, 670.5);
  ribbon(stSvg, kY, dY, '#8080b0', '#eeb4bc', -1);
  stroke(stSvg, line(dY), '#e8a4ae', 1, { 'stroke-dasharray': '2 1' });
  stroke(stSvg, line(kY), '#111', 1);
})();
```
